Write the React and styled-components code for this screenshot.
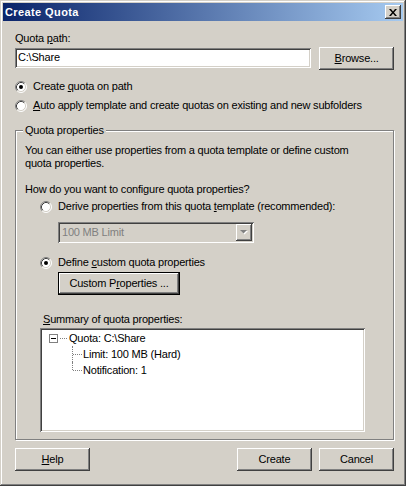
import styled, { createGlobalStyle } from "styled-components"

const GlobalStyle = createGlobalStyle`
  body {
    margin: 0;
    background: #d4d0c8;
    font-family: "Liberation Sans", Arial, sans-serif;
    font-size: 11px;
    line-height: 13px;
    letter-spacing: -0.2px;
    color: #000;
  }
`

const Window = styled.div`
  width: 406px;
  height: 486px;
  box-sizing: border-box;
  padding: 3px;
  background: #d4d0c8;
  box-shadow: inset -1px -1px #404040, inset 1px 1px #d4d0c8,
    inset -2px -2px #808080, inset 2px 2px #fff;
  display: flex;
  flex-direction: column;
`

const TitleBar = styled.div`
  height: 18px;
  padding: 0 2px;
  display: flex;
  align-items: center;
  justify-content: space-between;
  background: linear-gradient(to right, #0a246a, #a6caf0);
`

const Title = styled.span`
  color: #fff;
  font-weight: bold;
  font-size: 11px;
  letter-spacing: 0.4px;
`

const raised = `
  background: #d4d0c8;
  box-shadow: inset -1px -1px #404040, inset 1px 1px #fff,
    inset -2px -2px #808080, inset 2px 2px #d4d0c8;
`

const sunken = `
  box-shadow: inset 1px 1px #808080, inset -1px -1px #fff,
    inset 2px 2px #404040, inset -2px -2px #d4d0c8;
`

const CloseButton = styled.div`
  ${raised}
  width: 16px;
  height: 14px;
  display: flex;
  align-items: center;
  justify-content: center;
`

const Client = styled.div`
  flex: 1;
  padding: 0 9px 0 12px;
  display: flex;
  flex-direction: column;
`

const Label = styled.div`
  margin-top: ${(p) => p.$top || 0}px;
  margin-left: ${(p) => p.$indent || 0}px;
`

const PathRow = styled.div`
  margin-top: 2px;
  display: flex;
  align-items: flex-start;
  gap: 8px;
`

const TextBox = styled.div`
  ${sunken}
  background: #fff;
  width: 297px;
  height: 20px;
  margin-top: 1px;
  box-sizing: border-box;
  padding: 3px 3px 0;
`

const Button = styled.div`
  ${raised}
  ${(p) => p.$default && `box-shadow: inset 0 0 0 1px #000, inset -2px -2px #404040, inset 2px 2px #fff, inset -3px -3px #808080;`}
  width: ${(p) => p.$width || 75}px;
  height: 23px;
  margin-top: ${(p) => p.$top || 0}px;
  margin-left: ${(p) => p.$indent || 0}px;
  box-sizing: border-box;
  display: flex;
  align-items: center;
  justify-content: center;
`

const RadioRow = styled.div`
  display: flex;
  align-items: center;
  gap: 6px;
  height: 13px;
  margin-top: ${(p) => p.$top || 0}px;
  margin-left: ${(p) => p.$indent || 0}px;
`

const Radio = ({ checked }) => (
  <svg width="12" height="12" viewBox="0 0 12 12">
    <circle cx="6" cy="6" r="5" fill="#fff" />
    <path d="M2.11 9.89 A5.5 5.5 0 0 1 9.89 2.11" fill="none" stroke="#808080" />
    <path d="M9.89 2.11 A5.5 5.5 0 0 1 2.11 9.89" fill="none" stroke="#fff" />
    <path d="M2.82 9.18 A4.5 4.5 0 0 1 9.18 2.82" fill="none" stroke="#404040" />
    <path d="M9.18 2.82 A4.5 4.5 0 0 1 2.82 9.18" fill="none" stroke="#d4d0c8" />
    {checked && <circle cx="6" cy="6" r="2" fill="#000" />}
  </svg>
)

const GroupBox = styled.fieldset`
  margin: 12px 0 0;
  padding: 7px 9px 7px 9px;
  border: 1px solid #808080;
  box-shadow: 1px 1px 0 #fff, inset 1px 1px 0 #fff;
  display: flex;
  flex-direction: column;
  align-items: flex-start;
`

const Legend = styled.legend`
  padding: 0 2px;
  margin-left: -2px;
  background: #d4d0c8;
`

const Combo = styled.div`
  ${sunken}
  width: 196px;
  height: 21px;
  margin-top: 9px;
  margin-left: 33px;
  box-sizing: border-box;
  padding: 2px;
  display: flex;
  align-items: stretch;
  color: #808080;
`

const ComboText = styled.div`
  flex: 1;
  padding: 2px 0 0 2px;
`

const ComboButton = styled.div`
  ${raised}
  width: 16px;
  display: flex;
  align-items: center;
  justify-content: center;
`

const TreeBox = styled.div`
  ${sunken}
  background: #fff;
  width: 325px;
  height: 104px;
  margin-top: 2px;
  margin-left: 15px;
  box-sizing: border-box;
  padding: 2px;
`

const TreeItem = styled.div`
  position: relative;
  height: 16px;
  display: flex;
  align-items: center;
  padding-left: ${(p) => (p.$level ? 41 : 7)}px;

  ${(p) =>
    p.$level &&
    `
    &::before {
      content: "";
      position: absolute;
      left: 30px;
      top: 0;
      height: ${p.$last ? 8 : 16}px;
      border-left: 1px dotted #808080;
    }
    &::after {
      content: "";
      position: absolute;
      left: 31px;
      top: 8px;
      width: 9px;
      border-top: 1px dotted #808080;
    }
  `}
`

const Expander = styled.div`
  display: flex;
  align-items: center;
  margin-right: 2px;
`

const Footer = styled.div`
  margin-top: 8px;
  display: flex;
  gap: 7px;
`

const Spacer = styled.div`
  flex: 1;
`

export default function App() {
  return (
    <>
      <GlobalStyle />
      <Window>
        <TitleBar>
          <Title>Create Quota</Title>
          <CloseButton>
            <svg width="8" height="7" viewBox="0 0 8 7">
              <path d="M0 0h2l2 2.5 2-2.5h2L5 3.5 8 7H6L4 4.5 2 7H0l3-3.5z" fill="#000" />
            </svg>
          </CloseButton>
        </TitleBar>
        <Client>
          <Label $top={11}>
            Quota <u>p</u>ath:
          </Label>
          <PathRow>
            <TextBox>C:\Share</TextBox>
            <Button>
              <span>
                <u>B</u>rowse...
              </span>
            </Button>
          </PathRow>
          <RadioRow $top={10}>
            <Radio checked />
            <span>
              Create <u>q</u>uota on path
            </span>
          </RadioRow>
          <RadioRow $top={6}>
            <Radio />
            <span>
              <u>A</u>uto apply template and create quotas on existing and new subfolders
            </span>
          </RadioRow>
          <GroupBox>
            <Legend>Quota properties</Legend>
            <Label>
              You can either use properties from a quota template or define custom
              <br />
              quota properties.
            </Label>
            <Label $top={13}>How do you want to configure quota properties?</Label>
            <RadioRow $top={4} $indent={15}>
              <Radio />
              <span>
                Derive properties from this quota <u>t</u>emplate (recommended):
              </span>
            </RadioRow>
            <Combo>
              <ComboText>100 MB Limit</ComboText>
              <ComboButton>
                <svg width="8" height="5" viewBox="0 0 8 5">
                  <path d="M1 1h7L4.5 4.5z" fill="#fff" />
                  <path d="M0 0h7L3.5 3.5z" fill="#808080" />
                </svg>
              </ComboButton>
            </Combo>
            <RadioRow $top={13} $indent={15}>
              <Radio checked />
              <span>
                Define <u>c</u>ustom quota properties
              </span>
            </RadioRow>
            <Button $default $width={122} $top={3} $indent={33}>
              <span>
                Custom P<u>r</u>operties ...
              </span>
            </Button>
            <Label $top={18} $indent={18}>
              <u>S</u>ummary of quota properties:
            </Label>
            <TreeBox>
              <TreeItem>
                <Expander>
                  <svg width="9" height="9" viewBox="0 0 9 9">
                    <rect x="0.5" y="0.5" width="8" height="8" fill="#fff" stroke="#808080" />
                    <path d="M2 4.5h5" stroke="#000" />
                  </svg>
                </Expander>
                <svg width="7" height="1" viewBox="0 0 7 1">
                  <path d="M0 0.5h7" stroke="#808080" strokeDasharray="1 1" />
                </svg>
                <span style={{ marginLeft: 2 }}>Quota: C:\Share</span>
              </TreeItem>
              <TreeItem $level={1}>Limit: 100 MB (Hard)</TreeItem>
              <TreeItem $level={1} $last>
                Notification: 1
              </TreeItem>
            </TreeBox>
          </GroupBox>
          <Footer>
            <Button>
              <span>
                <u>H</u>elp
              </span>
            </Button>
            <Spacer />
            <Button>Create</Button>
            <Button>Cancel</Button>
          </Footer>
        </Client>
      </Window>
    </>
  )
}
